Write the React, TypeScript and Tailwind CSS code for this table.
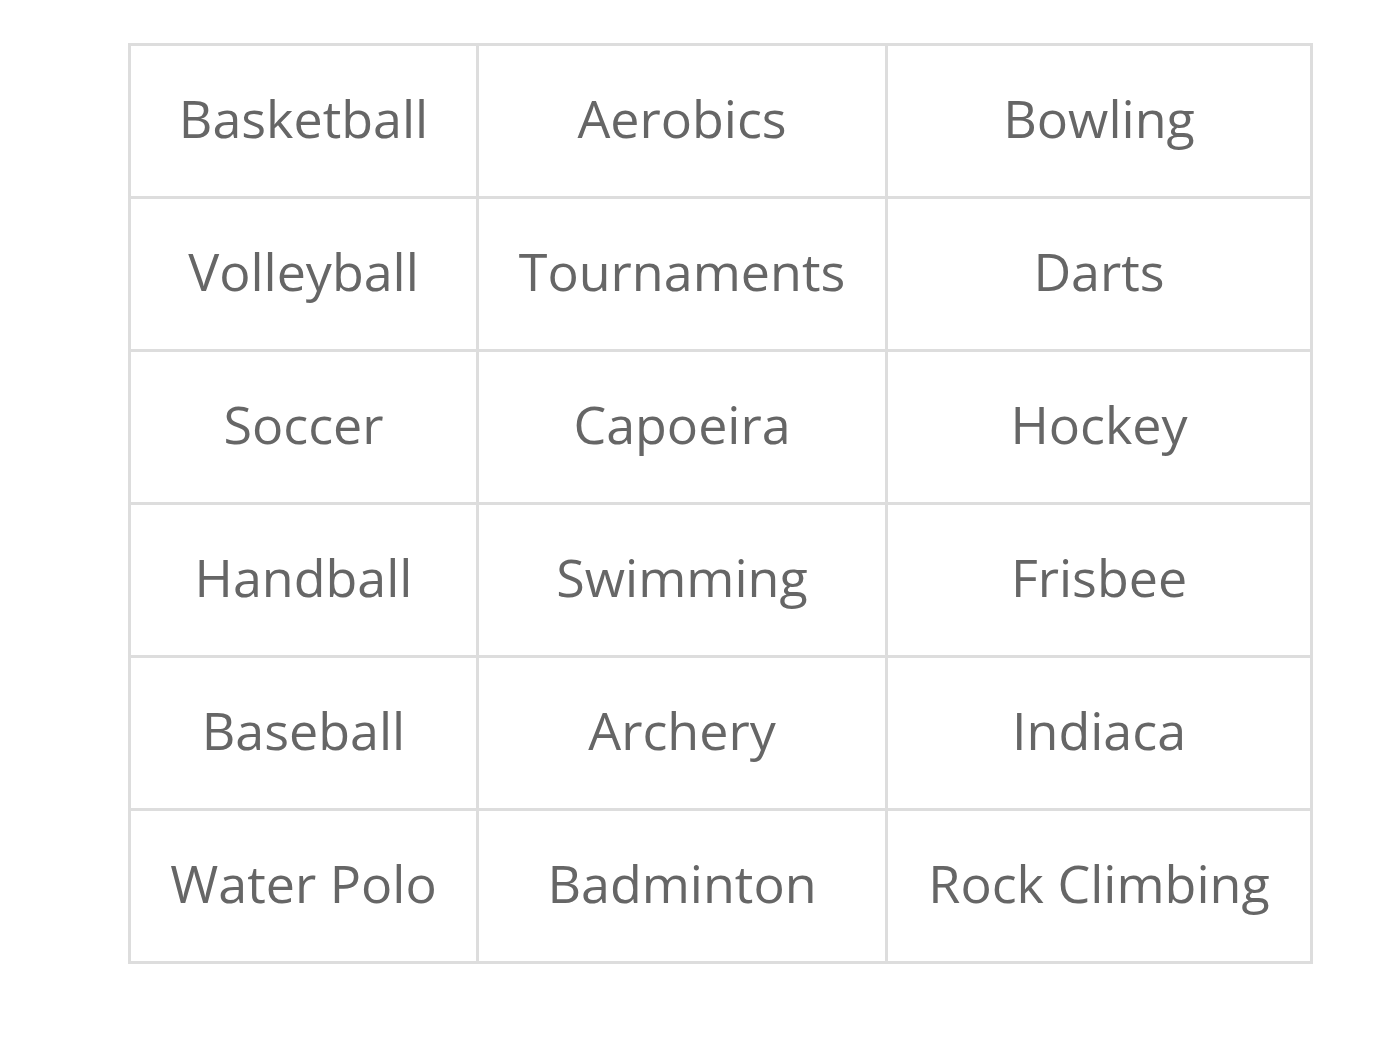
import React from 'react';

const sports = [
  'Basketball', 'Aerobics', 'Bowling',
  'Volleyball', 'Tournaments', 'Darts',
  'Soccer', 'Capoeira', 'Hockey',
  'Handball', 'Swimming', 'Frisbee',
  'Baseball', 'Archery', 'Indiaca',
  'Water Polo', 'Badminton', 'Rock Climbing',
];

const App = () => {
  return (
    <div className="min-h-screen bg-white pt-[43px] pl-[128px]" style={{ fontFamily: '"Open Sans", sans-serif' }}>
      <div className="grid grid-cols-[348px_409px_425px] w-fit border-l-[3px] border-t-[3px] border-[#dddddd]">
        {sports.map((name) => (
          <div
            key={name}
            className="h-[153px] pb-[6px] flex items-center justify-center border-r-[3px] border-b-[3px] border-[#dddddd] text-[52px] text-[#666666] whitespace-nowrap"
          >
            {name}
          </div>
        ))}
      </div>
    </div>
  );
};

export default App;
